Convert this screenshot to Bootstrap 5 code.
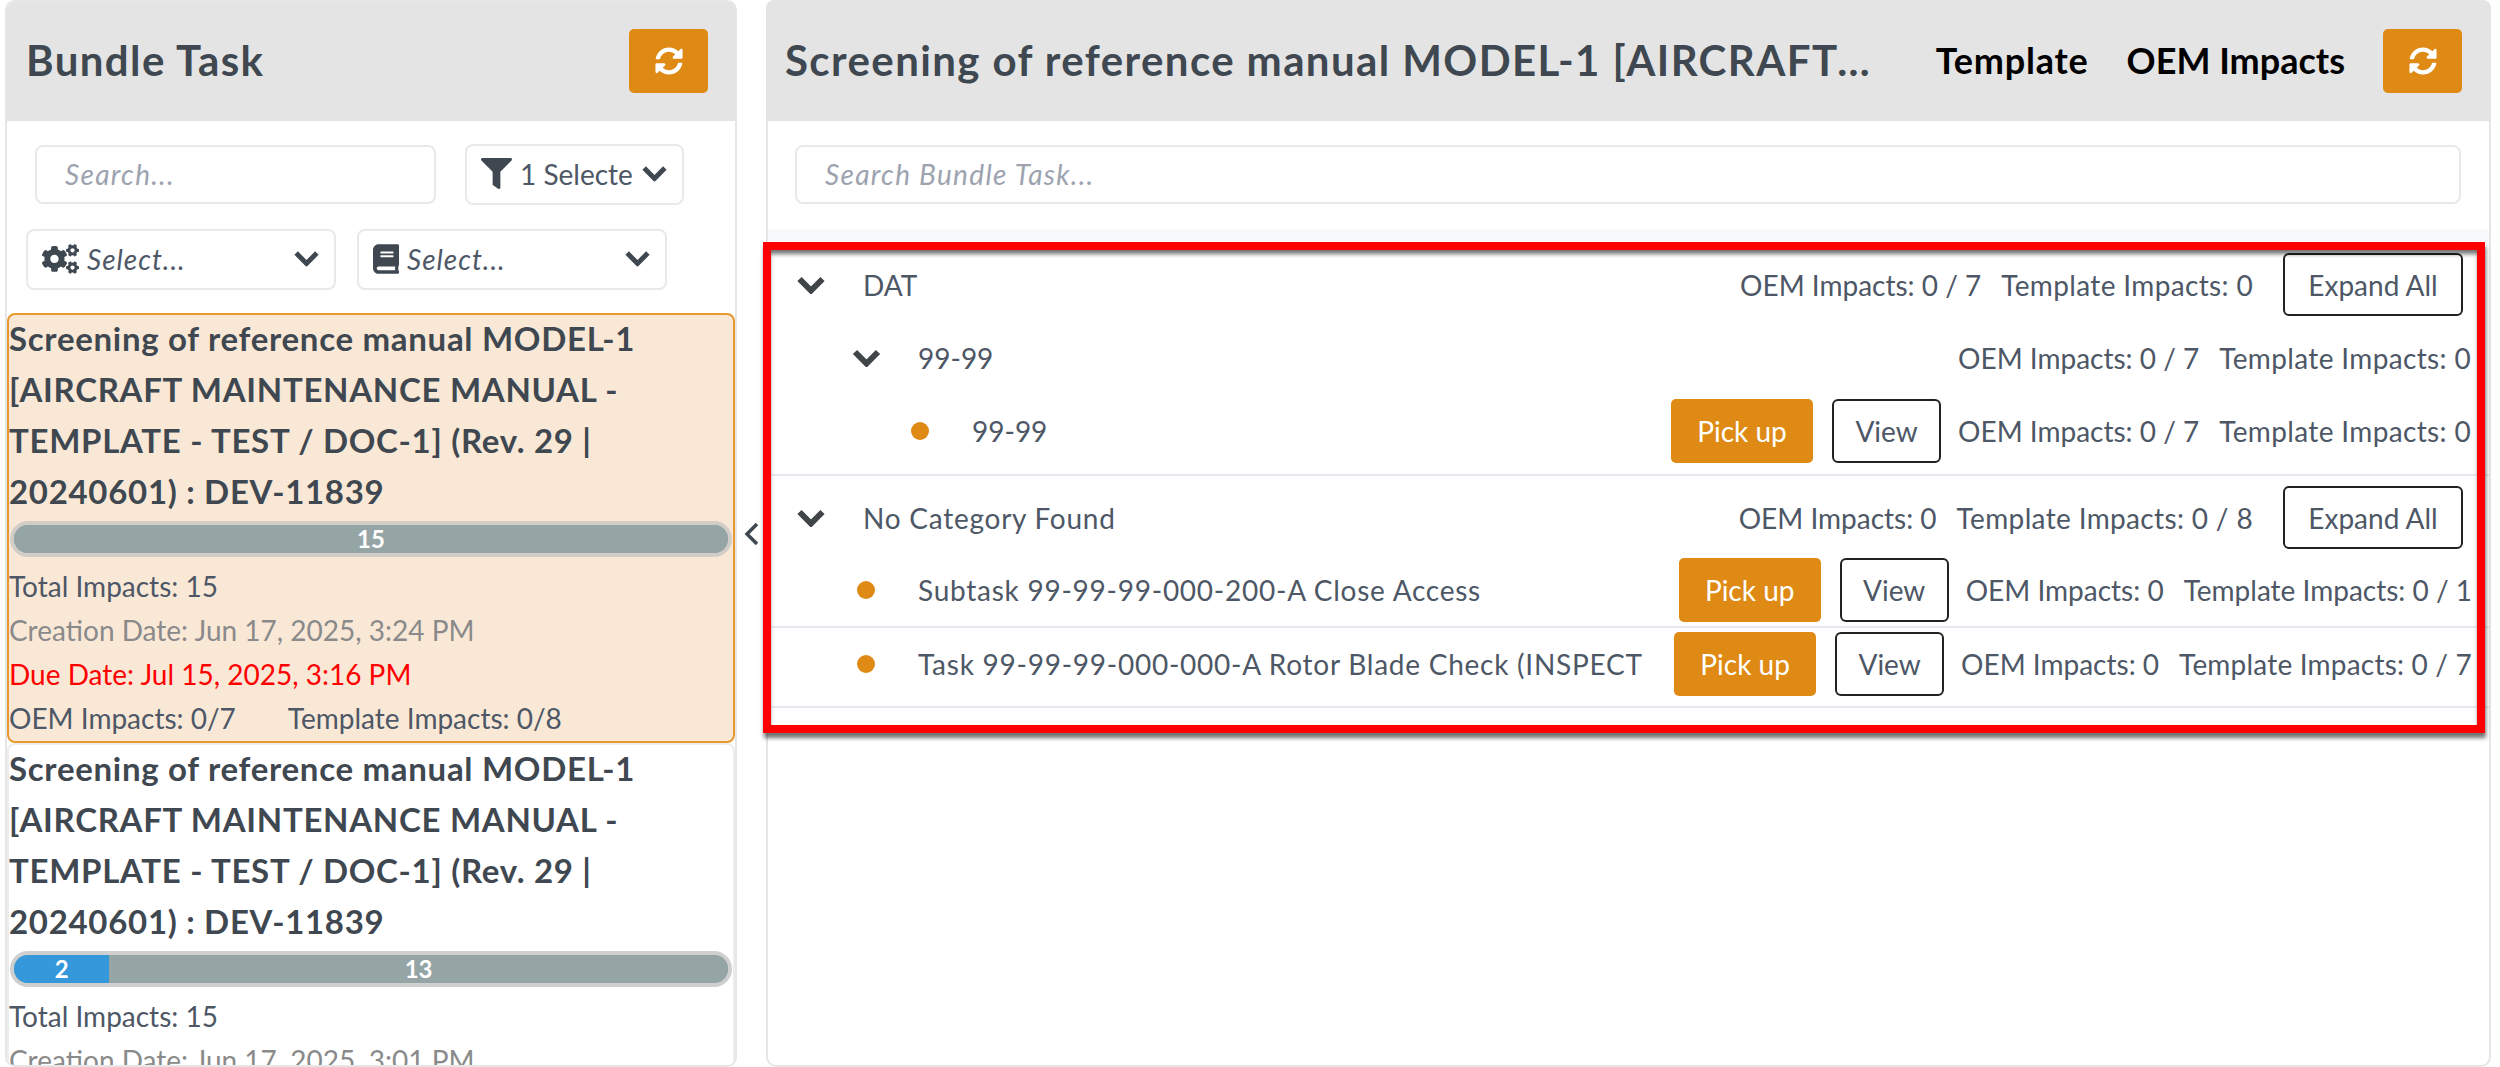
<!DOCTYPE html>
<html lang="en">
<head>
<meta charset="utf-8">
<title>Bundle Task</title>
<link rel="stylesheet" href="https://cdn.jsdelivr.net/npm/bootstrap@5.3.0/dist/css/bootstrap.min.css">
<style>
html,body{height:1067px;overflow:hidden}
body{font-family:"Lato","Liberation Sans",sans-serif;font-size:28px;color:#4d5766;background:#fff}
.shell{height:1067px;padding-left:5px;padding-right:9px}
.pane{border:2px solid #e6e6e6;border-radius:10px;background:#fff;height:1067px}
.pane-left{width:732px;flex:none;overflow:hidden}
.pane-right{flex:1 1 0;min-width:0}
.pane-head{height:121px;background:#e4e4e4;border-radius:8px 8px 0 0;margin:-2px -2px 0;padding-bottom:1px}
.pane-left .pane-head{padding-left:21px;padding-right:29px}
.pane-right .pane-head{padding-left:19px;padding-right:29px}
.pane-title{font-size:42px;letter-spacing:1.4px;font-weight:700;color:#3f4850;white-space:nowrap;overflow:hidden;text-overflow:ellipsis;margin:0}
.pane-right .pane-title{flex:1 1 0;min-width:0}
.head-link{font-size:36px;font-weight:700;color:#000;white-space:nowrap;margin-right:38px}
.head-first{margin-left:58px;letter-spacing:.8px}
.btn-sync{width:79px;height:64px;flex:none;background:#de8a14;border:0;border-radius:5px;padding:0;margin-top:1px}
.btn-sync svg{width:28px;height:28px;fill:#fff}
.ico{fill:#3f4850;display:block;flex:none}
.chev{fill:none;stroke:#3f4850;stroke-width:5.5;display:block;flex:none}
.filters-a{padding:23px 0 0 28px;gap:29px}
.filters-b{padding:24px 0 23px 19px;gap:21px}
.field{height:59px;border:2px solid #e9e9e9;border-radius:8px;font-size:28px;color:#4d5766;padding:0 28px 2px;box-shadow:none}
.field::placeholder{font-style:italic;color:#9ca3af;letter-spacing:1.3px}
.field-search{width:401px}
.pick{height:61px;border:2px solid #e9e9e9;border-radius:8px;background:#fff;font-size:28px;color:#4d5766}
.pick-filter{width:219px;padding:0 14px 2px;overflow:hidden;white-space:nowrap}
.pick-select{width:310px;padding:0 14px 2px;font-style:italic}
.pick-select span{flex:1 1 0;letter-spacing:1px}
.job{border:2px solid #ececec;border-radius:8px;background:#fff;line-height:44px}
.job-on{background:#fae8d7;border-color:#e8982f;height:430px}
.job-name{font-size:33px;letter-spacing:.7px;font-weight:700;line-height:51px;color:#3f4850;margin:-2px 0 0}
.meter{height:36px;border:4px solid #cfcfcf;border-radius:18px;background:#95a5a6;margin:4px 1px 7px;font-size:24px;font-weight:700;--bs-progress-bar-color:#fff}
.job-on .meter{border-color:#d3cdc7}
.seg-blue{background:#3498db}
.seg-grey{background:#95a5a6}
.line-created{color:#8a8a8a}
.line-due{color:#f00}
.line-pair{gap:52px}
.handle{width:29px;height:1067px;flex:none}
.handle svg{fill:none;stroke:#3f4850;stroke-width:3.5}
.search-wrap{padding:24px 28px 25px 27px}
.field-wide{width:100%}
.band{height:12px;background:#f8f9fa}
.rowline{padding-right:26px;white-space:nowrap}
.rowline .lbl{overflow:hidden;white-space:nowrap;letter-spacing:.75px}
.r1{height:67px;padding-top:4px;margin-top:8px}
.r2{height:80px;padding-top:4px;padding-right:18px}
.r3{height:78px;padding-top:3px;padding-bottom:11px;padding-right:18px}
.r4{height:83px;padding-top:10px;padding-bottom:8px;border-top:2px solid #e9e9ef}
.r5{height:69px;padding-top:1px;padding-bottom:4px;padding-right:17px}
.r6{height:82px;padding-top:4px;padding-bottom:10px;padding-right:17px;border-top:2px solid #e9e9ef;border-bottom:2px solid #e9e9ef}
.chev-lg{stroke:#404548;stroke-width:6}
.tw{width:30px;margin-left:28px;margin-right:37px}
.tw2{width:31px;margin-left:83px;margin-right:36px}
.dot{width:18px;height:18px;border-radius:50%;background:#de8a14;flex:none}
.dot-a{margin-left:143px;margin-right:43px}
.dot-b{margin-left:89px;margin-right:43px}
.lbl-clip{width:726px;flex:none}
.stats{gap:20px}
.stats span:last-child{letter-spacing:.35px}
.r5 .stats span:last-child{letter-spacing:0}
.r6 .stats span:last-child{letter-spacing:.2px}
.acts{gap:19px;margin-right:17px}
.btn-pick{width:142px;height:64px;background:#de8a14;border:0;color:#fff;font-size:28px;border-radius:5px;padding:0}
.btn-view{width:109px;height:64px;background:#fff;border:2px solid #222;color:#4d5766;font-size:28px;border-radius:6px;padding:0}
.btn-expand{width:180px;height:63px;background:#fff;border:2px solid #222;color:#4d5766;font-size:28px;border-radius:6px;padding:0;margin-left:30px}
.callout{position:absolute;left:-5px;top:240px;width:1722px;height:491px;border:8px solid #f00;box-shadow:1px 5px 4px rgba(0,0,0,.55),inset 0 5px 4px -1px rgba(0,0,0,.55);pointer-events:none}
</style>
</head>
<body>
<svg width="0" height="0" class="position-absolute">
<defs>
<symbol id="i-sync" viewBox="0 0 512 512"><path d="M370.72 133.28C339.458 104.008 298.888 87.962 255.848 88c-77.458.068-144.328 53.178-162.791 126.85-1.344 5.363-6.122 9.15-11.651 9.15H24.103c-7.498 0-13.194-6.807-11.807-14.176C33.933 94.924 134.813 8 256 8c66.448 0 126.791 26.136 171.315 68.685L463.03 40.97C478.149 25.851 504 36.559 504 57.941V192c0 13.255-10.745 24-24 24H345.941c-21.382 0-32.09-25.851-16.971-40.971l41.75-41.749zM32 296h134.059c21.382 0 32.09 25.851 16.971 40.971l-41.75 41.75c31.262 29.273 71.835 45.319 114.876 45.28 77.418-.07 144.315-53.144 162.787-126.849 1.344-5.363 6.122-9.15 11.651-9.15h57.304c7.498 0 13.194 6.807 11.807 14.176C478.067 417.076 377.187 504 256 504c-66.448 0-126.791-26.136-171.315-68.685L48.97 471.03C33.851 486.149 8 475.441 8 454.059V320c0-13.255 10.745-24 24-24z"/></symbol>
<symbol id="i-chev" viewBox="0 0 30 18"><path d="M3.5 3 15 14.5 26.5 3"/></symbol>
</defs>
</svg>
<div class="shell d-flex">
  <div class="pane pane-left">
    <div class="pane-head d-flex align-items-center justify-content-between">
      <h1 class="pane-title">Bundle Task</h1>
      <button class="btn btn-sync d-flex align-items-center justify-content-center" type="button" aria-label="Refresh"><svg><use href="#i-sync"/></svg></button>
    </div>
    <div class="d-flex align-items-center filters-a">
      <input class="form-control field field-search" type="text" placeholder="Search...">
      <div class="pick pick-filter d-flex align-items-center gap-2">
        <svg class="ico" width="31" height="31" viewBox="0 0 512 512"><path d="M487.976 0H24.028C2.71 0-8.047 25.866 7.058 40.971L192 225.941V432c0 7.831 3.821 15.17 10.237 19.662l80 55.98C298.02 518.69 320 507.493 320 487.98V225.941l184.947-184.97C520.021 25.896 509.338 0 487.976 0z"/></svg>
        <span>1 Selecte</span>
        <svg class="chev" width="27" height="17" viewBox="0 0 30 18"><use href="#i-chev"/></svg>
      </div>
    </div>
    <div class="d-flex filters-b">
      <div class="pick pick-select d-flex align-items-center gap-2">
        <svg class="ico" width="37" height="30" viewBox="0 0 640 512"><path d="M512.1 191l-8.2 14.3c-3 5.3-9.4 7.5-15.1 5.4-11.8-4.4-22.6-10.7-32.1-18.6-4.6-3.8-5.8-10.5-2.8-15.7l8.2-14.3c-6.9-8-12.3-17.3-15.9-27.4h-16.5c-6 0-11.2-4.3-12.2-10.3-2-12-2.1-24.6 0-37.1 1-6 6.2-10.4 12.2-10.4h16.5c3.6-10.1 9-19.4 15.9-27.4l-8.2-14.3c-3-5.2-1.9-11.9 2.8-15.7 9.5-7.9 20.4-14.2 32.1-18.6 5.7-2.1 12.1.1 15.1 5.4l8.2 14.3c10.5-1.9 21.2-1.9 31.7 0L552 6.3c3-5.3 9.4-7.5 15.1-5.4 11.8 4.4 22.6 10.7 32.1 18.6 4.6 3.8 5.8 10.5 2.8 15.7l-8.2 14.3c6.9 8 12.3 17.3 15.9 27.4h16.5c6 0 11.2 4.3 12.2 10.3 2 12 2.1 24.6 0 37.1-1 6-6.2 10.4-12.2 10.4h-16.5c-3.6 10.1-9 19.4-15.9 27.4l8.2 14.3c3 5.2 1.9 11.9-2.8 15.7-9.5 7.9-20.4 14.2-32.1 18.6-5.7 2.1-12.1-.1-15.1-5.4l-8.2-14.3c-10.4 1.9-21.2 1.9-31.7 0zm-10.5-58.8c38.5 29.6 82.4-14.3 52.8-52.8-38.5-29.7-82.4 14.3-52.8 52.8zM386.3 286.1l33.7 16.8c10.1 5.8 14.5 18.1 10.5 29.1-8.9 24.2-26.4 46.4-42.6 65.8-7.4 8.9-20.2 11.1-30.3 5.3l-29.1-16.8c-16 13.7-34.6 24.6-54.9 31.7v33.6c0 11.6-8.3 21.6-19.7 23.6-24.6 4.2-50.4 4.4-75.9 0-11.5-2-20-11.9-20-23.6V418c-20.3-7.2-38.9-18-54.9-31.7L74 403c-10 5.8-22.9 3.6-30.3-5.3-16.2-19.4-33.3-41.6-42.2-65.7-4-10.9.4-23.2 10.5-29.1l33.3-16.8c-3.9-20.9-3.9-42.4 0-63.4L12 205.8c-10.1-5.8-14.6-18.1-10.5-29 8.9-24.2 26-46.4 42.2-65.8 7.4-8.9 20.2-11.1 30.3-5.3l29.1 16.8c16-13.7 34.6-24.6 54.9-31.7V57.1c0-11.5 8.2-21.5 19.6-23.5 24.6-4.2 50.5-4.4 76-.1 11.5 2 20 11.9 20 23.6v33.6c20.3 7.2 38.9 18 54.9 31.7l29.1-16.8c10-5.8 22.9-3.6 30.3 5.3 16.2 19.4 33.2 41.6 42.1 65.8 4 10.9.1 23.2-10 29.1l-33.7 16.8c3.9 21 3.9 42.5 0 63.5zm-117.6 21.1c59.2-77-28.7-164.9-105.7-105.7-59.2 77 28.7 164.9 105.7 105.7zm243.4 182.7l-8.2 14.3c-3 5.3-9.4 7.5-15.1 5.4-11.8-4.4-22.6-10.7-32.1-18.6-4.6-3.8-5.8-10.5-2.8-15.7l8.2-14.3c-6.9-8-12.3-17.3-15.9-27.4h-16.5c-6 0-11.2-4.3-12.2-10.3-2-12-2.1-24.6 0-37.1 1-6 6.2-10.4 12.2-10.4h16.5c3.6-10.1 9-19.4 15.9-27.4l-8.2-14.3c-3-5.2-1.9-11.9 2.8-15.7 9.5-7.9 20.4-14.2 32.1-18.6 5.7-2.1 12.1.1 15.1 5.4l8.2 14.3c10.5-1.9 21.2-1.9 31.7 0l8.2-14.3c3-5.3 9.4-7.5 15.1-5.4 11.8 4.4 22.6 10.7 32.1 18.6 4.6 3.8 5.8 10.5 2.8 15.7l-8.2 14.3c6.9 8 12.3 17.3 15.9 27.4h16.5c6 0 11.2 4.3 12.2 10.3 2 12 2.1 24.6 0 37.1-1 6-6.2 10.4-12.2 10.4h-16.5c-3.6 10.1-9 19.4-15.9 27.4l8.2 14.3c3 5.2 1.9 11.9-2.8 15.7-9.5 7.9-20.4 14.2-32.1 18.6-5.7 2.1-12.1-.1-15.1-5.4l-8.2-14.3c-10.4 1.9-21.2 1.9-31.7 0zM501.6 431c38.5 29.6 82.4-14.3 52.8-52.8-38.5-29.6-82.4 14.3-52.8 52.8z"/></svg>
        <span>Select...</span>
        <svg class="chev" width="27" height="17" viewBox="0 0 30 18"><use href="#i-chev"/></svg>
      </div>
      <div class="pick pick-select d-flex align-items-center gap-2">
        <svg class="ico" width="26" height="30" viewBox="0 0 448 512"><path d="M448 360V24c0-13.3-10.7-24-24-24H96C43 0 0 43 0 96v320c0 53 43 96 96 96h328c13.3 0 24-10.7 24-24v-16c0-7.5-3.5-14.3-8.9-18.7-4.2-15.4-4.2-59.3 0-74.7 5.4-4.3 8.9-11.1 8.9-18.6zM128 134c0-3.3 2.7-6 6-6h212c3.3 0 6 2.7 6 6v20c0 3.3-2.7 6-6 6H134c-3.3 0-6-2.7-6-6v-20zm0 64c0-3.3 2.7-6 6-6h212c3.3 0 6 2.7 6 6v20c0 3.3-2.7 6-6 6H134c-3.3 0-6-2.7-6-6v-20zm253.4 250H96c-17.7 0-32-14.3-32-32 0-17.6 14.4-32 32-32h285.4c-1.9 17.1-1.9 46.9 0 64z"/></svg>
        <span>Select...</span>
        <svg class="chev" width="27" height="17" viewBox="0 0 30 18"><use href="#i-chev"/></svg>
      </div>
    </div>
    <div class="job job-on">
      <p class="job-name">Screening of reference manual MODEL-1 [AIRCRAFT MAINTENANCE MANUAL - TEMPLATE - TEST / DOC-1] (Rev. 29 | 20240601) : DEV-11839</p>
      <div class="progress meter"><div class="progress-bar seg-grey" style="width:100%">15</div></div>
      <div>Total Impacts: 15</div>
      <div class="line-created">Creation Date: Jun 17, 2025, 3:24 PM</div>
      <div class="line-due">Due Date: Jul 15, 2025, 3:16 PM</div>
      <div class="d-flex line-pair"><span>OEM Impacts: 0/7</span><span>Template Impacts: 0/8</span></div>
    </div>
    <div class="job">
      <p class="job-name">Screening of reference manual MODEL-1 [AIRCRAFT MAINTENANCE MANUAL - TEMPLATE - TEST / DOC-1] (Rev. 29 | 20240601) : DEV-11839</p>
      <div class="progress meter"><div class="progress-bar seg-blue" style="width:13.33%">2</div><div class="progress-bar seg-grey" style="width:86.67%">13</div></div>
      <div>Total Impacts: 15</div>
      <div class="line-created">Creation Date: Jun 17, 2025, 3:01 PM</div>
    </div>
  </div>
  <div class="handle d-flex align-items-center justify-content-center">
    <svg width="17" height="24" viewBox="0 0 17 24"><path d="M14 2 4 12l10 10"/></svg>
  </div>
  <div class="pane pane-right position-relative">
    <div class="pane-head d-flex align-items-center">
      <h2 class="pane-title">Screening of reference manual MODEL-1 [AIRCRAFT MAINTENANCE MANUAL - TEMPLATE - TEST / DOC-1] (Rev. 29 | 20240601) : DEV-11839</h2>
      <span class="head-link head-first">Template</span>
      <span class="head-link">OEM Impacts</span>
      <button class="btn btn-sync d-flex align-items-center justify-content-center" type="button" aria-label="Refresh"><svg><use href="#i-sync"/></svg></button>
    </div>
    <div class="search-wrap"><input class="form-control field field-wide" type="text" placeholder="Search Bundle Task..."></div>
    <div class="band"></div>
    <div class="d-flex align-items-center rowline r1">
      <svg class="chev chev-lg tw" height="18" viewBox="0 0 30 18"><use href="#i-chev"/></svg>
      <span>DAT</span>
      <div class="d-flex align-items-center ms-auto">
        <div class="d-flex stats"><span>OEM Impacts: 0 / 7</span><span>Template Impacts: 0</span></div>
        <button class="btn btn-expand" type="button">Expand All</button>
      </div>
    </div>
    <div class="d-flex align-items-center rowline r2">
      <svg class="chev chev-lg tw2" height="18" viewBox="0 0 30 18"><use href="#i-chev"/></svg>
      <span>99-99</span>
      <div class="d-flex stats ms-auto"><span>OEM Impacts: 0 / 7</span><span>Template Impacts: 0</span></div>
    </div>
    <div class="d-flex align-items-center rowline r3">
      <span class="dot dot-a"></span>
      <span>99-99</span>
      <div class="d-flex align-items-center ms-auto">
        <div class="d-flex acts"><button class="btn btn-pick" type="button">Pick up</button><button class="btn btn-view" type="button">View</button></div>
        <div class="d-flex stats"><span>OEM Impacts: 0 / 7</span><span>Template Impacts: 0</span></div>
      </div>
    </div>
    <div class="d-flex align-items-center rowline r4">
      <svg class="chev chev-lg tw" height="18" viewBox="0 0 30 18"><use href="#i-chev"/></svg>
      <span class="lbl">No Category Found</span>
      <div class="d-flex align-items-center ms-auto">
        <div class="d-flex stats"><span>OEM Impacts: 0</span><span>Template Impacts: 0 / 8</span></div>
        <button class="btn btn-expand" type="button">Expand All</button>
      </div>
    </div>
    <div class="d-flex align-items-center rowline r5">
      <span class="dot dot-b"></span>
      <span class="lbl">Subtask 99-99-99-000-200-A Close Access</span>
      <div class="d-flex align-items-center ms-auto">
        <div class="d-flex acts"><button class="btn btn-pick" type="button">Pick up</button><button class="btn btn-view" type="button">View</button></div>
        <div class="d-flex stats"><span>OEM Impacts: 0</span><span>Template Impacts: 0 / 1</span></div>
      </div>
    </div>
    <div class="d-flex align-items-center rowline r6">
      <span class="dot dot-b"></span>
      <span class="lbl lbl-clip">Task 99-99-99-000-000-A Rotor Blade Check (INSPECTION)</span>
      <div class="d-flex align-items-center ms-auto">
        <div class="d-flex acts"><button class="btn btn-pick" type="button">Pick up</button><button class="btn btn-view" type="button">View</button></div>
        <div class="d-flex stats"><span>OEM Impacts: 0</span><span>Template Impacts: 0 / 7</span></div>
      </div>
    </div>
    <div class="callout"></div>
  </div>
</div>
<script src="https://cdn.jsdelivr.net/npm/bootstrap@5.3.0/dist/js/bootstrap.bundle.min.js"></script>
</body>
</html>
